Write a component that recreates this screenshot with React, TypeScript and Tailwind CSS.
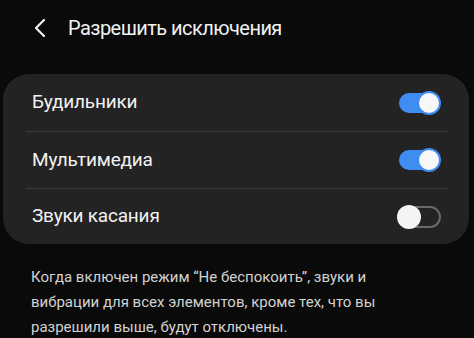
import React from "react";

function Toggle({ on }: { on: boolean }) {
  if (on) {
    return (
      <div className="relative w-[44px] h-[24px] shrink-0">
        <div className="absolute left-[2px] top-[2px] w-[40px] h-[20px] rounded-full bg-[#3f8cf3]" />
        <div className="absolute right-[0px] top-[0px] w-[24px] h-[24px] rounded-full bg-[#f7f7f7] border-[2px] border-[#3f8cf3]" />
      </div>
    );
  }
  return (
    <div className="relative w-[44px] h-[24px] shrink-0">
      <div className="absolute left-[2px] top-[1px] w-[42px] h-[22px] rounded-full border-[2px] border-[#6a6a6a]" />
      <div className="absolute left-0 top-0 w-[24px] h-[24px] rounded-full bg-[#f4f4f4]" />
    </div>
  );
}

function Row({ label, on, divider, h }: { label: string; on: boolean; divider: boolean; h: string }) {
  return (
    <div>
      <div className={`${h} flex items-center justify-between pl-[29px] pr-[28px]`}>
        <span className="text-[19px] tracking-[-0.2px] text-[#f2f2f2]">{label}</span>
        <Toggle on={on} />
      </div>
      {divider && <div className="h-px bg-[#3b3b3b] ml-[23px] mr-[21px]" />}
    </div>
  );
}

export default function App() {
  return (
    <div
      className="w-[474px] h-[338px] overflow-hidden bg-[#0a0a0a]"
      style={{ fontFamily: "Roboto, 'Noto Sans', sans-serif" }}
    >
      <div className="h-[56px] flex items-center pl-[33px]">
        <svg width="14" height="22" viewBox="0 0 14 22" className="mr-[21px]">
          <path d="M11 3 L3 11 L11 19" fill="none" stroke="#f0f0f0" strokeWidth="2.2" strokeLinecap="round" strokeLinejoin="round" />
        </svg>
        <span className="text-[20px] tracking-[-0.55px] text-[#f2f2f2]">Разрешить исключения</span>
      </div>
      <div className="mt-[18px] ml-[3px] w-[466px] rounded-[26px] bg-[#232323]">
        <Row label="Будильники" on={true} divider={true} h="h-[57px]" />
        <Row label="Мультимедиа" on={true} divider={true} h="h-[56px]" />
        <Row label="Звуки касания" on={false} divider={false} h="h-[55px]" />
      </div>
      <div className="mt-[21px] pl-[31px] pr-[20px] text-[15px] leading-[25px] text-[#d2d2d2]">
        Когда включен режим “Не беспокоить”, звуки и<br />
        вибрации для всех элементов, кроме тех, что вы<br />
        разрешили выше, будут отключены.
      </div>
    </div>
  );
}
